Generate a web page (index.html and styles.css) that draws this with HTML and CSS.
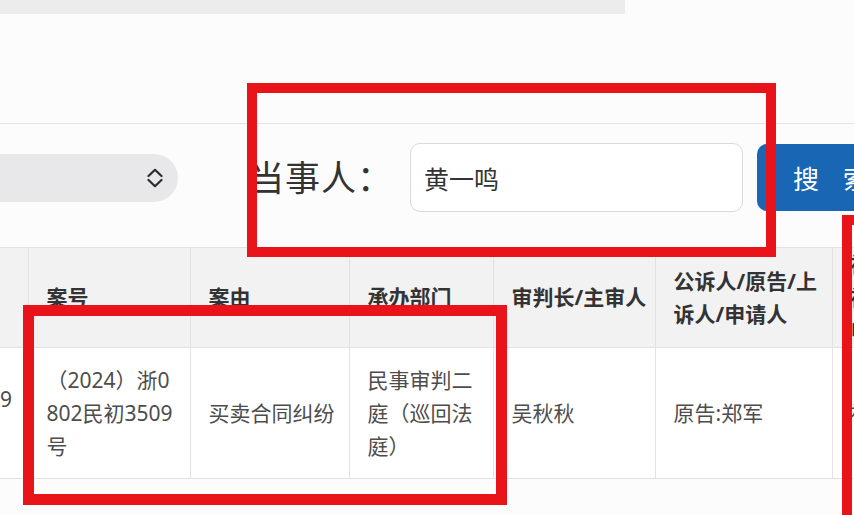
FILE: index.html
```html
<!DOCTYPE html>
<html lang="zh-CN">
<head>
    <meta charset="UTF-8">
    <title>案件查询</title>
    <link rel="stylesheet" href="styles.css">
</head>
<body>
    <div class="page">
        <div class="top-strip"></div>
        <div class="header-space"></div>

        <div class="search-row">
            <div class="court-select">
                <svg class="chevrons" width="16" height="20" viewBox="0 0 16 20">
                    <polyline points="1.5,8 8,1.8 14.5,8" fill="none" stroke="#2b2b2b" stroke-width="2.2" stroke-linecap="round" stroke-linejoin="round"/>
                    <polyline points="1.5,12 8,18.2 14.5,12" fill="none" stroke="#2b2b2b" stroke-width="2.2" stroke-linecap="round" stroke-linejoin="round"/>
                </svg>
            </div>
            <label class="field-label" for="party">当事人：</label>
            <input class="field-input" id="party" type="text" value="黄一鸣">
            <button class="search-btn">搜索</button>
        </div>

        <table class="cases">
            <colgroup>
                <col class="w-lead">
                <col class="w-no">
                <col class="w-cause">
                <col class="w-dept">
                <col class="w-judge">
                <col class="w-plaintiff">
                <col class="w-defendant">
            </colgroup>
            <thead>
                <tr>
                    <th class="lead"></th>
                    <th class="case-no">案号</th>
                    <th>案由</th>
                    <th>承办部门</th>
                    <th class="nowrap">审判长/主审人</th>
                    <th>公诉人/原告/上诉人/申请人</th>
                    <th>被告人/被告/被上诉人/被申请人</th>
                </tr>
            </thead>
            <tbody>
                <tr>
                    <td class="lead">9</td>
                    <td class="case-no">（2024）浙0802民初3509号</td>
                    <td>买卖合同纠纷</td>
                    <td>民事审判二庭（巡回法庭）</td>
                    <td>吴秋秋</td>
                    <td>原告:郑军</td>
                    <td>被告:黄一鸣</td>
                </tr>
            </tbody>
        </table>

        <!-- red annotation boxes drawn over the screenshot -->
        <div class="mark mark-party"></div>
        <div class="mark mark-case"></div>
        <div class="mark mark-side"></div>
    </div>
</body>
</html>
```

FILE: styles.css
```css
html, body {
    margin: 0;
    padding: 0;
}

body {
    background: #fcfcfc;
    font-family: "Noto Sans", "Noto Sans CJK SC", sans-serif;
    color: #333;
}

.page {
    position: relative;
    width: 854px;
    height: 515px;
    overflow: hidden;
}

.top-strip {
    width: 625px;
    height: 14px;
    background: #ececec;
}

.header-space {
    height: 109px;
    border-bottom: 1px solid #e4e4e4;
}

.search-row {
    display: flex;
    align-items: center;
    height: 69px;
    padding: 19px 0 35px 0;
    white-space: nowrap;
}

.court-select {
    flex: none;
    display: flex;
    align-items: center;
    justify-content: flex-end;
    width: 218px;
    height: 48px;
    margin-left: -40px;
    padding-right: 15px;
    box-sizing: border-box;
    background: #e8e8ea;
    border-radius: 24px;
}

.chevrons {
    display: block;
}

.field-label {
    flex: none;
    margin-left: 71px;
    width: 161px;
    font-size: 35px;
    line-height: 40px;
    color: #333;
    letter-spacing: 1px;
}

.field-input {
    flex: none;
    width: 333px;
    height: 69px;
    box-sizing: border-box;
    padding: 0 13px;
    border: 1px solid #dadada;
    border-radius: 10px;
    background: #fff;
    font-family: "Noto Sans CJK SC", sans-serif;
    font-size: 25px;
    color: #333;
    outline: none;
}

.search-btn {
    flex: none;
    margin-left: 14px;
    width: 130px;
    height: 67px;
    padding: 0 0 0 36px;
    text-align: left;
    border: none;
    border-radius: 10px 0 0 10px;
    background: #1866b4;
    color: #fff;
    font-family: "Noto Sans CJK SC", sans-serif;
    font-size: 26px;
    letter-spacing: 24px;
    white-space: nowrap;
    overflow: hidden;
}

.cases {
    border-collapse: collapse;
    table-layout: fixed;
    width: 982px;
    font-size: 21px;
    line-height: 33px;
}

.w-lead { width: 28px; }
.w-no { width: 162px; }
.w-cause { width: 159px; }
.w-dept { width: 144px; }
.w-judge { width: 162px; }
.w-plaintiff { width: 177px; }
.w-defendant { width: 150px; }

.cases th,
.cases td {
    border: 1px solid #e2e2e2;
    padding: 0 4px 0 18px;
    text-align: left;
    vertical-align: middle;
}

.cases thead tr {
    height: 100px;
}

.cases th {
    background: #f2f2f3;
    font-weight: bold;
    color: #333;
}

.cases tbody tr {
    height: 131px;
}

.cases td {
    background: #fff;
    color: #4d4d4d;
}

.cases .lead {
    padding: 0;
    border-left: none;
}

.cases td.lead {
    vertical-align: top;
    padding-top: 35px;
}

.cases .case-no {
    padding-right: 12px;
    word-break: break-all;
}

.nowrap {
    white-space: nowrap;
}

.mark {
    position: absolute;
    border: 10px solid #e81419;
    box-sizing: border-box;
}

.mark-party {
    left: 247px;
    top: 83px;
    width: 529px;
    height: 174px;
}

.mark-case {
    left: 23px;
    top: 305px;
    width: 484px;
    height: 200px;
    border-width: 11px;
}

.mark-side {
    left: 842px;
    top: 215px;
    width: 200px;
    height: 400px;
}
```
